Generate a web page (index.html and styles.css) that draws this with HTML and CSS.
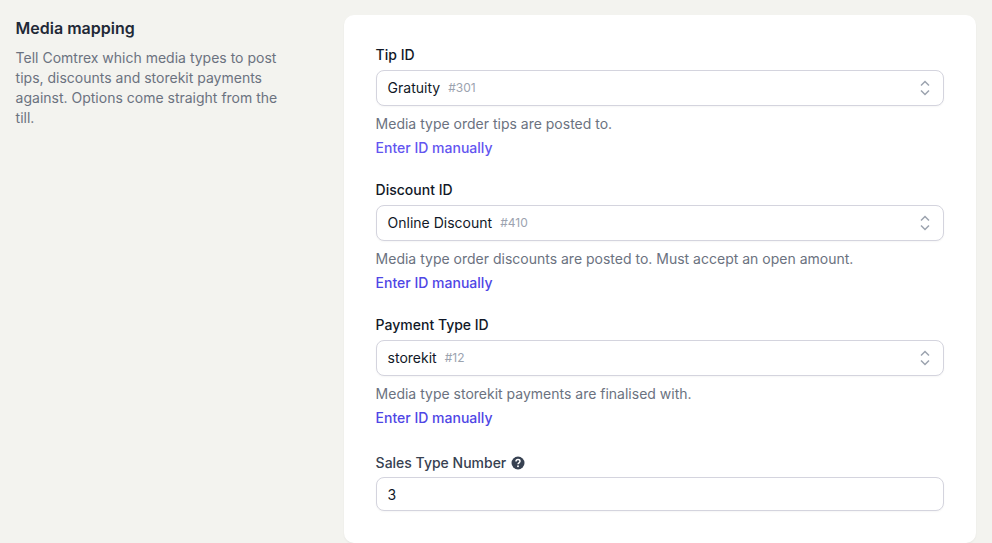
FILE: index.html
```html
<!DOCTYPE html>
<html lang="en">
<head>
    <meta charset="UTF-8">
    <meta name="viewport" content="width=device-width, initial-scale=1.0">
    <title>Media mapping</title>
    <link rel="stylesheet" href="styles.css">
</head>
<body>
    <div class="section">
        <div class="section-intro">
            <h2>Media mapping</h2>
            <p>Tell Comtrex which media types to post tips, discounts and storekit payments against. Options come straight from the till.</p>
        </div>
        <form class="card">
            <div class="field">
                <label>Tip ID</label>
                <div class="select">
                    <span class="select-name">Gratuity</span>
                    <span class="select-id">#301</span>
                    <svg class="chevrons" viewBox="0 0 12 18" fill="none"><path d="M2 6.5 6 2.500l4 4M2 11.500l4 4 4-4"/></svg>
                </div>
                <p class="hint">Media type order tips are posted to.</p>
                <a class="manual-link first" href="#">Enter ID manually</a>
            </div>
            <div class="field">
                <label>Discount ID</label>
                <div class="select">
                    <span class="select-name">Online Discount</span>
                    <span class="select-id">#410</span>
                    <svg class="chevrons" viewBox="0 0 12 18" fill="none"><path d="M2 6.5 6 2.500l4 4M2 11.500l4 4 4-4"/></svg>
                </div>
                <p class="hint">Media type order discounts are posted to. Must accept an open amount.</p>
                <a class="manual-link" href="#">Enter ID manually</a>
            </div>
            <div class="field">
                <label>Payment Type ID</label>
                <div class="select">
                    <span class="select-name">storekit</span>
                    <span class="select-id">#12</span>
                    <svg class="chevrons" viewBox="0 0 12 18" fill="none"><path d="M2 6.5 6 2.500l4 4M2 11.500l4 4 4-4"/></svg>
                </div>
                <p class="hint">Media type storekit payments are finalised with.</p>
                <a class="manual-link" href="#">Enter ID manually</a>
            </div>
            <div class="field">
                <label class="label-muted">Sales Type Number
                    <svg class="help" viewBox="0 0 14 14"><circle cx="7" cy="7" r="6.5" fill="#374151"/><path d="M5 5.4C5 4.3 5.9 3.6 7 3.6s2 .7 2 1.700c0 1.500-2 1.500-2 3" fill="none" stroke="#fff" stroke-width="1.500"/><circle cx="7" cy="10.300" r=".95" fill="#fff"/></svg>
                </label>
                <input class="text-input" type="text" value="3">
            </div>
        </form>
    </div>
</body>
</html>
```

FILE: styles.css
```css
* {
    box-sizing: border-box;
}

body {
    margin: 0;
    height: 543px;
    overflow: hidden;
    background: #f3f3ef;
    font-family: 'Inter', sans-serif;
    font-size: 14px;
    line-height: 20px;
    color: #111827;
}

.section {
    display: flex;
    align-items: flex-start;
    gap: 64px;
    padding: 15px 16px 0 15.6px;
}

.section-intro {
    width: 264px;
    flex-shrink: 0;
}

.section-intro h2 {
    margin: 3px 0 0;
    font-size: 16px;
    line-height: 20px;
    font-weight: 600;
    color: #1f2937;
}

.section-intro p {
    margin: 10px 0 0;
    color: #6b7280;
}

.card {
    flex: 1;
    height: 528px;
    padding: 30px 32px;
    background: #fff;
    border-radius: 10px;
    box-shadow: 0 1px 2px rgba(0, 0, 0, 0.05);
}

.field {
    display: flex;
    flex-direction: column;
    align-items: flex-start;
    margin-bottom: 22px;
}

.field label {
    display: flex;
    align-items: center;
    gap: 5px;
    margin-bottom: 5px;
    font-weight: 500;
    color: #111827;
}

.field .label-muted {
    color: #374151;
    margin-top: 3px;
    margin-bottom: 4px;
}

.select {
    display: flex;
    align-items: center;
    width: 100%;
    height: 36px;
    padding: 0 12px 0 11px;
    border: 1px solid #d4d4de;
    border-radius: 8px;
    background: #fff;
    box-shadow: 0 1px 2px rgba(0, 0, 0, 0.04);
}

.select-name {
    color: #111827;
}

.select-id {
    margin-left: 8px;
    font-size: 12px;
    color: #9ca3af;
}

.chevrons {
    width: 12px;
    height: 18px;
    margin-left: auto;
    stroke: #9ca3af;
    stroke-width: 1.5;
}

.hint {
    margin: 8px 0 0;
    color: #6b7280;
}

.manual-link {
    margin-top: 4px;
    font-weight: 500;
    color: #4f46e5;
    text-decoration: none;
}

.manual-link.first {
    color: #6355f0;
}

.help {
    width: 14px;
    height: 14px;
}

.text-input {
    width: 100%;
    height: 34px;
    padding: 0 11px;
    border: 1px solid #d4d4de;
    border-radius: 8px;
    font: inherit;
    color: #111827;
    background: #fff;
    box-shadow: 0 1px 2px rgba(0, 0, 0, 0.04);
}
```
